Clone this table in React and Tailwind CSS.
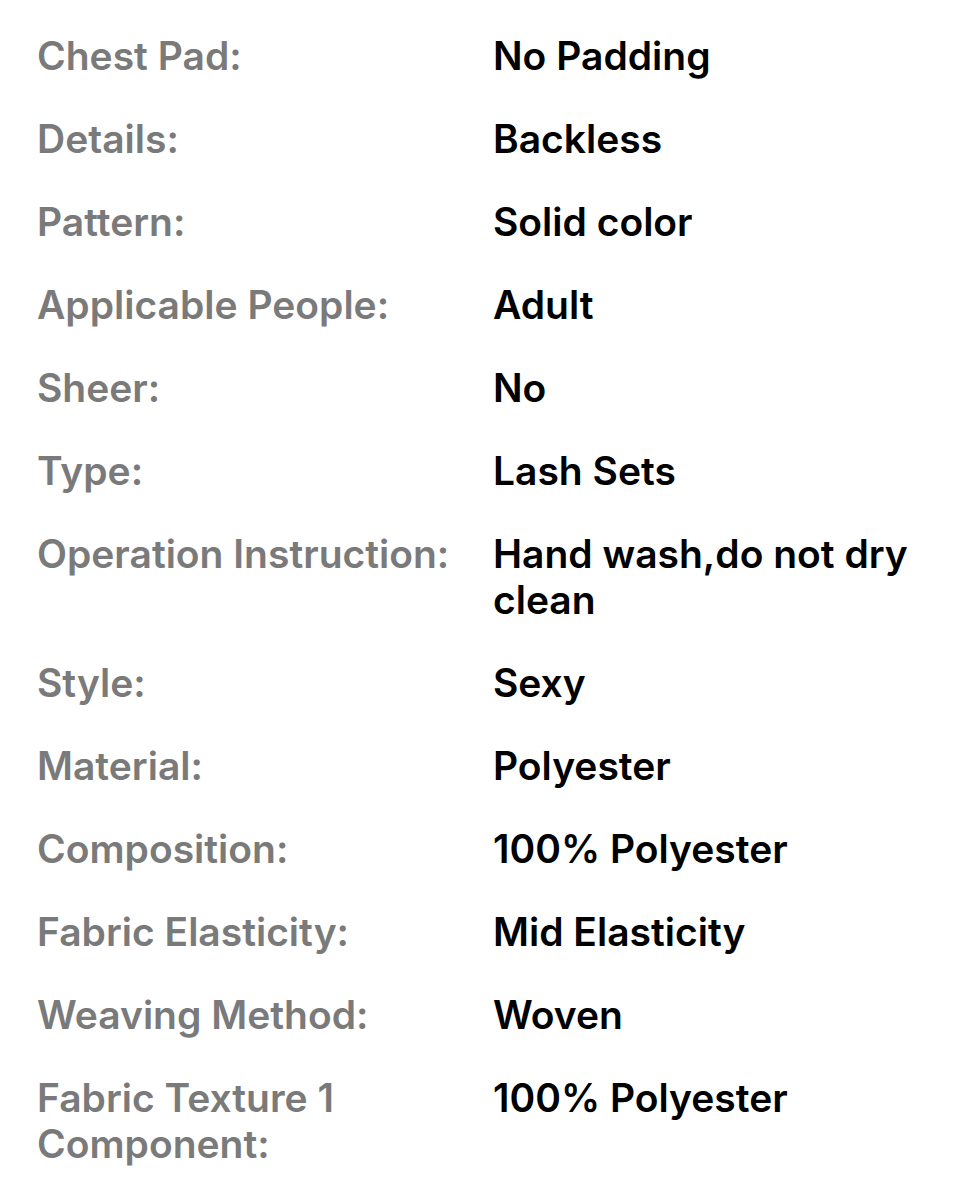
import React from "react";

const rows = [
  ["Chest Pad:", "No Padding"],
  ["Details:", "Backless"],
  ["Pattern:", "Solid color"],
  ["Applicable People:", "Adult"],
  ["Sheer:", "No"],
  ["Type:", "Lash Sets"],
  ["Operation Instruction:", "Hand wash,do not dry clean"],
  ["Style:", "Sexy"],
  ["Material:", "Polyester"],
  ["Composition:", "100% Polyester"],
  ["Fabric Elasticity:", "Mid Elasticity"],
  ["Weaving Method:", "Woven"],
  ["Fabric Texture 1 Component:", "100% Polyester"],
];

export default function App() {
  return (
    <div
      className="w-[960px] h-[1179px] bg-white overflow-hidden pt-[33px] pl-[37px] pr-[36px] flex flex-col gap-[37px]"
      style={{ fontFamily: "Inter, 'Noto Sans', sans-serif" }}
    >
      {rows.map(([k, v]) => (
        <div key={k} className="grid grid-cols-[456px_1fr] text-[39px] leading-[46px] font-semibold">
          <div className="text-[#7a7a7a] pr-4">{k}</div>
          <div className="text-black">{v}</div>
        </div>
      ))}
    </div>
  );
}
